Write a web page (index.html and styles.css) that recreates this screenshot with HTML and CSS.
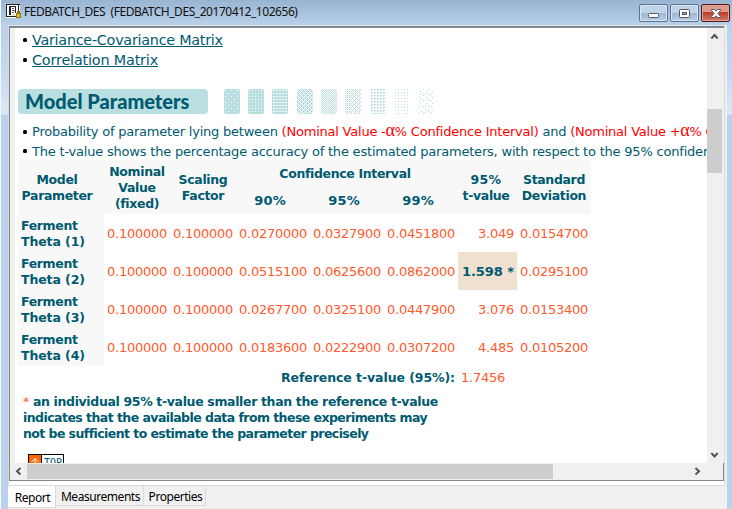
FILE: index.html
```html
<!DOCTYPE html>
<html lang="en">
<head>
<meta charset="utf-8">
<title>FEDBATCH_DES</title>
<link rel="stylesheet" href="styles.css">
</head>
<body>
<div class="window">
  <header class="titlebar">
    <svg class="appicon" width="16" height="16" viewBox="0 0 16 16" shape-rendering="crispEdges">
      <path fill="#fff" d="M0 0h14v14H0z"/><path fill="#222" d="M0 0h14v1H0zM0 0h1v13H0zM1 12h10v1H1zM3 2h2v9H3zM5 2h5v1H5zM9 3h1v6H9zM12 1h1v8h-1z"/>
      <path fill="#555" d="M6 4h2v1H6zM6 6h3v1H6zM6 8h2v1H6z"/><path fill="#eee5a5" d="M6 10h3v2H6z"/>
      <path fill="#8b7418" d="M10 9h5v5h-5zM11 7h3v2h-3z"/><path fill="#e3bd22" d="M11 10h3v3h-3z"/>
    </svg>
    <span class="title">FEDBATCH_DES&nbsp; (FEDBATCH_DES_20170412_102656)</span>
    <div class="controls">
      <span class="ctl"><svg width="26" height="14" viewBox="0 0 26 14"><rect x="7.5" y="7.5" width="10" height="4" rx="1" fill="#fff" stroke="#535666"/></svg></span>
      <span class="ctl"><svg width="26" height="14" viewBox="0 0 26 14"><rect x="7.5" y="3.5" width="10" height="8" rx="1" fill="#fff" stroke="#535666"/><rect x="10.5" y="6.500" width="4" height="2" fill="#8db3d8" stroke="#535666"/></svg></span>
      <span class="ctl close"><svg width="26" height="14" viewBox="0 0 26 14"><path d="M8.500 3.500h3l1.500 1.700 1.500-1.700h3v1L15 7.500l2.500 3v1h-3L13 9.800l-1.500 1.700h-3v-1l2.500-3-2.500-3z" fill="#fff" stroke="#535666"/></svg></span>
    </div>
  </header>
  <div class="client">
    <div class="viewframe">
      <div class="view">
        <main class="report">
          <ul class="links">
            <li><a class="l1">Variance-Covariance Matrix</a></li>
            <li><a class="l2">Correlation Matrix</a></li>
          </ul>
          <div class="banner">
            <h1><span>Model Parameters</span></h1>
            <svg class="tiles" width="211" height="25" viewBox="0 0 211 25" shape-rendering="crispEdges">
              <defs>
                <pattern id="p1" width="6" height="6" patternUnits="userSpaceOnUse"><path fill="#b9dfe1" d="M0 0h6v6H0z"/><path fill="#fff" d="M1 1h1v1H1zM4 4h1v1H4z"/></pattern>
                <pattern id="p2" width="3" height="3" patternUnits="userSpaceOnUse"><path fill="#b9dfe1" d="M0 0h3v3H0z"/><path fill="#fff" d="M1 1h1v1H1z"/></pattern>
                <pattern id="p3" width="3" height="3" patternUnits="userSpaceOnUse"><path fill="#b9dfe1" d="M0 0h3v3H0z"/><path fill="#fff" d="M1 1h2v1H1z"/></pattern>
                <pattern id="p4" width="4" height="4" patternUnits="userSpaceOnUse"><path fill="#b9dfe1" d="M0 0h1v1H0zM2 0h1v1H2zM1 1h1v1H1zM3 1h1v1H3zM0 2h1v1H0zM2 2h1v1H2zM3 3h1v1H3zM1 3h1v1H1zM1 0h1v1H1zM3 2h1v1H3z"/></pattern>
                <pattern id="p5" width="2" height="2" patternUnits="userSpaceOnUse"><path fill="#b9dfe1" d="M0 0h1v1H0zM1 1h1v1H1z"/></pattern>
                <pattern id="p6" width="4" height="4" patternUnits="userSpaceOnUse"><path fill="#b9dfe1" d="M1 0h1v1H1zM3 0h1v1H3zM0 1h1v1H0zM1 2h1v1H1zM3 2h1v1H3zM2 3h1v1H2z"/></pattern>
                <pattern id="p7" width="3" height="3" patternUnits="userSpaceOnUse"><path fill="#b9dfe1" d="M0 0h2v1H0zM0 1h1v1H0z"/></pattern>
                <pattern id="p8" width="3" height="3" patternUnits="userSpaceOnUse"><path fill="#b9dfe1" d="M0 0h1v1H0z"/></pattern>
                <pattern id="p9" width="6" height="6" patternUnits="userSpaceOnUse"><path fill="#b9dfe1" d="M1 0h1v1H1zM4 2h1v1H4zM0 4h1v1H0zM3 5h1v1H3z"/></pattern>
              </defs>
              <rect x="0" width="16" height="25" rx="3" fill="url(#p1)"/><rect x="24" width="16" height="25" rx="3" fill="url(#p2)"/><rect x="48" width="16" height="25" rx="3" fill="url(#p3)"/><rect x="73" width="16" height="25" rx="3" fill="url(#p4)"/><rect x="97" width="16" height="25" rx="3" fill="url(#p5)"/><rect x="121" width="16" height="25" rx="3" fill="url(#p6)"/><rect x="146" width="16" height="25" rx="3" fill="url(#p7)"/><rect x="170" width="16" height="25" rx="3" fill="url(#p8)"/><rect x="194" width="16" height="25" rx="3" fill="url(#p9)"/>
            </svg>
          </div>
          <ul class="notes">
            <li><span class="n1">Probability of parameter lying between <em>(Nominal Value -<i>α</i>% Confidence Interval)</em> and <em>(Nominal Value +<i>α</i>% Confidence Interval)</em></span></li>
            <li><span class="n2">The t-value shows the percentage accuracy of the estimated parameters, with respect to the 95% confidence</span></li>
          </ul>
          <table>
            <colgroup><col class="c0"><col class="c1"><col class="c1"><col class="c2"><col class="c2"><col class="c2"><col class="c3"><col class="c2"></colgroup>
            <thead>
              <tr class="h1"><th class="name" rowspan="2">Model<br>Parameter</th><th rowspan="2">Nominal<br>Value<br>(fixed)</th><th rowspan="2">Scaling<br>Factor</th><th class="ci" colspan="3">Confidence Interval</th><th class="tv" rowspan="2"><span class="pct">95%</span><br>t-value</th><th rowspan="2">Standard<br>Deviation</th></tr>
              <tr class="h2"><th>90%</th><th>95%</th><th>99%</th></tr>
            </thead>
            <tbody>
              <tr><th>Ferment<br><span class="th">Theta (1)</span></th><td>0.100000</td><td>0.100000</td><td>0.0270000</td><td>0.0327900</td><td>0.0451800</td><td>3.049</td><td>0.0154700</td></tr>
              <tr><th>Ferment<br><span class="th">Theta (2)</span></th><td>0.100000</td><td>0.100000</td><td>0.0515100</td><td>0.0625600</td><td>0.0862000</td><td class="flag">1.598 *</td><td>0.0295100</td></tr>
              <tr><th>Ferment<br><span class="th">Theta (3)</span></th><td>0.100000</td><td>0.100000</td><td>0.0267700</td><td>0.0325100</td><td>0.0447900</td><td>3.076</td><td>0.0153400</td></tr>
              <tr><th>Ferment<br><span class="th">Theta (4)</span></th><td>0.100000</td><td>0.100000</td><td>0.0183600</td><td>0.0222900</td><td>0.0307200</td><td>4.485</td><td>0.0105200</td></tr>
            </tbody>
            <tfoot>
              <tr><td class="ref" colspan="6">Reference t-value (95%):</td><td class="refval" colspan="2">1.7456</td></tr>
            </tfoot>
          </table>
          <p class="foot"><span class="f1"><b>*</b> an individual 95% t-value smaller than the reference t-value</span><br><span class="f2">indicates that the available data from these experiments may</span><br><span class="f3">not be sufficient to estimate the parameter precisely</span></p>
          <div class="top"><span class="up"><svg width="12" height="13" viewBox="0 0 12 13"><path d="M6 12V3.500M2.500 7 6 3.500 9.500 7" fill="none" stroke="#fff"/></svg></span><span class="toptext">TOP</span></div>
        </main>
        <div class="vbar">
          <svg class="vup" width="16" height="16" viewBox="0 0 16 16"><path d="M4.300 10.500 7.500 7l3.200 3.500" fill="none" stroke="#555" stroke-width="2"/></svg>
          <span class="vthumb"></span>
          <svg class="vdown" width="16" height="16" viewBox="0 0 16 16"><path d="M4.300 6 7.500 9.500 10.700 6" fill="none" stroke="#555" stroke-width="2"/></svg>
        </div>
      </div>
      <div class="hbar">
        <svg width="17" height="16" viewBox="0 0 17 16"><path d="M10.500 5 7 8.200l3.500 3.200" fill="none" stroke="#555" stroke-width="2"/></svg>
        <span class="hthumb"></span>
        <svg class="hright" width="17" height="16" viewBox="0 0 17 16"><path d="M6.500 5 10 8.200l-3.500 3.200" fill="none" stroke="#555" stroke-width="2"/></svg>
      </div>
    </div>
    <nav class="tabs"><span class="tab active">Report</span><span class="tab t2">Measurements</span><span class="tab t3">Properties</span></nav>
  </div>
</div>
</body>
</html>
```
FILE: styles.css
```css
* { box-sizing: border-box; }
body { margin: 0; overflow: hidden; }
ul, h1, p { margin: 0; padding: 0; list-style: none; }
svg { display: block; flex: none; }
.window {
  width: 732px; height: 509px; padding: 0 5px 0 7px;
  border-left: 1px solid #f5f8fb;
  background: linear-gradient(#99b4d1 0, #b9d1ea 25px, #c6daf0 75px, #dde9f7 114px, #b9d1ea 115px);
}
.titlebar { height: 25px; display: flex; margin-left: -3px; }
.appicon { margin: 4px 0 0 1px; }
.title {
  margin-left: 2px; font: 12px/24px "Noto Sans", sans-serif;
  color: #111; white-space: pre; letter-spacing: -0.45px;
}
.controls { display: flex; gap: 2px; margin: 4px -3px 0 auto; }
.ctl {
  width: 29px; height: 18px; padding: 1px; border: 1px solid #5c7394; border-radius: 2px;
  box-shadow: inset 0 0 0 1px #d8e6f5;
  background: linear-gradient(#bfd3e9 50%, #9cb6d2 50%, #b7d0e9);
}
.ctl.close {
  border-color: #4c1720; box-shadow: inset 0 0 0 1px #e5a298;
  background: linear-gradient(#e09a8c 45%, #bd3a24 45%, #d57a63);
}
.client { height: 484px; background: #f0f0f0; border-top: 1px solid #e3e3e3; }
.viewframe {
  width: 717px; height: 460px; padding-bottom: 4px; background: #fff; border: solid #dadada;
  border-width: 0 1px 1px;
}
.view, .hbar { border: solid #808891; border-width: 0 1px; }
.view { height: 437px; display: flex; border-top-width: 2px; }
.report {
  flex: none; width: 697px; height: 435px; overflow: hidden; padding: 2px 0 0 3px;
  border-left: 5px solid #f0f0f0; background: #fff;
  font: 13px/16px "DejaVu Sans", Verdana, sans-serif; color: #005a70; white-space: nowrap;
}
.links { font-size: 14.4px; line-height: 20px; color: #000; }
.links a { color: #005a70; text-decoration: underline; }
.l1 { letter-spacing: -0.28px; }
.l2 { letter-spacing: -0.18px; }
li { display: flex; align-items: center; }
li::before { content: ""; flex: none; width: 4px; height: 4px; margin: 0 5px 0 5px; border-radius: 1.500px; background: #000; }
.links li { height: 20px; }
.banner { display: flex; gap: 16px; margin-top: 19px; }
h1 {
  width: 190px; height: 25px; padding-left: 7px; border-radius: 4px; background: #b9dfe1;
  font: 900 20px/25px Lato, sans-serif;
}
.notes { margin-top: 8px; }
.notes li { height: 20px; letter-spacing: -0.22px; }
.notes li:last-child { height: 18px; letter-spacing: -0.2px; }
.notes li:last-child span { padding-top: 2px; }
em { font-style: normal; color: #f00; }
em i { font: 18px/12px "Liberation Serif", serif; }
table { table-layout: fixed; width: 573px; border-collapse: collapse; }
.c0 { width: 86px; } .c1 { width: 66px; } .c2 { width: 74px; } .c3 { width: 59px; }
th, td { padding: 2px 3px 0; }
th { background: #f8f8f8; font-size: 12.500px; text-align: center; letter-spacing: -0.35px; }
th.name { padding-right: 11px; }
th.ci { padding: 0 7px 0 3px; }
th.tv { padding-right: 6px; }
.pct { letter-spacing: 0.3px; }
.h1 { height: 27px; } .h2 { height: 27px; }
.h2 th { padding: 0 9px 0 3px; font-size: 13px; letter-spacing: 0.2px; }
tbody tr { height: 38px; }
tbody th { text-align: left; }
.th { letter-spacing: -0.1px; }
td { color: #ff5a2d; text-align: right; letter-spacing: -0.25px; }
td.flag { background: #f0e0d0; color: #005a70; font-weight: bold; font-size: 13px; letter-spacing: -0.05px; }
tfoot tr { height: 24px; }
tfoot td { padding-top: 0; }
td.ref { color: #005a70; font-weight: bold; font-size: 12.500px; letter-spacing: -0.08px; }
td.refval { text-align: left; }
.foot { margin: 4px 0 0 5px; font-size: 12.500px; font-weight: bold; }
.f1 { letter-spacing: -0.35px; }
.f2 { letter-spacing: -0.55px; }
.f3 { letter-spacing: -0.57px; }
.foot b { color: #ff5a2d; font-weight: normal; }
.top { display: flex; width: 36px; height: 15px; margin: 12px 0 0 10px; border: 1px solid #000; }
.up { width: 13px; border-right: 1px solid #000; background: #f60; }
.toptext { padding-left: 2px; font: 10px/15px "DejaVu Sans Mono", monospace; }
.vbar { flex: none; width: 17px; display: flex; flex-direction: column; background: #f0f0f0; }
.vthumb { width: 15px; height: 64px; margin-top: 65px; background: #cdcdcd; }
.vdown { margin-top: auto; }
.hbar { height: 18px; display: flex; background: #f0f0f0; border-bottom-width: 1px; }
.hthumb { width: 526px; height: 15px; background: #cdcdcd; margin-top: 1px; }
.hright { margin: 0 17px 0 auto; }
.tabs { display: flex; font: 12px/21px "Noto Sans", sans-serif; color: #000; letter-spacing: -0.45px; }
.tab { height: 20px; padding-left: 2px; border: solid #dadada; border-width: 0 1px 1px 0; text-align: center; white-space: nowrap; }
.tab.active { width: 48px; height: 22px; line-height: 24px; background: #fff; }
.t2 { width: 88px; }
.t3 { width: 62px; }
```
